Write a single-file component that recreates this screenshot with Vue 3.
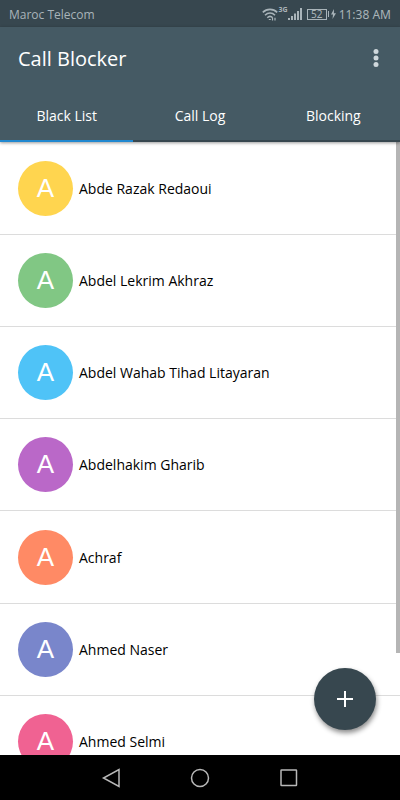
<script setup>
import { ref } from 'vue'

const tabs = ['Black List', 'Call Log', 'Blocking']
const active = ref(0)

const contacts = [
  { name: 'Abde Razak Redaoui', color: '#ffd54f' },
  { name: 'Abdel Lekrim Akhraz', color: '#81c784' },
  { name: 'Abdel Wahab Tihad Litayaran', color: '#4fc3f7' },
  { name: 'Abdelhakim Gharib', color: '#ba68c8' },
  { name: 'Achraf', color: '#ff8a65' },
  { name: 'Ahmed Naser', color: '#7986cb' },
  { name: 'Ahmed Selmi', color: '#f06292' },
]
</script>

<template>
  <div class="screen">
    <div class="status">
      <span class="carrier">Maroc Telecom</span>
      <svg class="wifi" width="16" height="13" viewBox="0 0 16 13" fill="none" stroke="currentColor" stroke-width="1.6">
        <path d="M.8 4.400C4.800 .4 11.200 .4 15.200 4.400M3 7.200C6 4.200 10 4.200 13 7.200M5.300 9.800c1.700-1.700 3.700-1.700 5.400 0" />
        <path d="M6.800 11.500h2M10.500 12.500V9.800M13 9.800v2.700" stroke-width="1.200" />
      </svg>
      <span class="net">3G</span>
      <svg class="signal" width="14" height="12" viewBox="0 0 14 12" fill="currentColor">
        <path d="M0 10h2v2H0zM3 8h2v4H3zM6 5.500h2V12H6zM9 3h2v9H9zM12 0h2v12h-2z" />
      </svg>
      <span class="battery">52</span>
      <svg class="charge" width="9" height="12" viewBox="0 0 9 12" fill="currentColor">
        <path d="M1 3h1v6H1zM7 1L4 6.500h2L5.500 11 9 5.200H6.900z" />
      </svg>
      <span class="time">11:38 AM</span>
    </div>

    <header class="header">
      <div class="bar">
        <h1>Call Blocker</h1>
        <button class="more" type="button" aria-label="More options">
          <svg width="6" height="20" viewBox="0 0 6 20" fill="currentColor">
            <circle cx="3" cy="3.500" r="2.500" />
            <circle cx="3" cy="10" r="2.500" />
            <circle cx="3" cy="16.500" r="2.500" />
          </svg>
        </button>
      </div>
      <nav class="tabs">
        <button
          v-for="(tab, i) in tabs"
          :key="tab"
          type="button"
          class="tab"
          :class="{ active: i === active }"
          @click="active = i"
        >{{ tab }}</button>
      </nav>
    </header>

    <main class="content">
      <ul class="list">
        <li v-for="c in contacts" :key="c.name" class="row">
          <span class="avatar" :style="{ background: c.color }">A</span>
          <span class="name">{{ c.name }}</span>
        </li>
      </ul>
      <div class="thumb"></div>
      <button class="fab" type="button" aria-label="Add contact">
        <svg width="18" height="18" viewBox="0 0 18 18" stroke="currentColor" stroke-width="2">
          <path d="M9 1v16M1 9h16" />
        </svg>
      </button>
    </main>

    <footer class="navbar">
      <button type="button" aria-label="Back">
        <svg width="20" height="20" viewBox="0 0 20 20"><path d="M18 1.500v17L2.500 10z" /></svg>
      </button>
      <button type="button" aria-label="Home">
        <svg width="20" height="20" viewBox="0 0 20 20"><circle cx="10" cy="10" r="8.500" /></svg>
      </button>
      <button type="button" aria-label="Recent apps">
        <svg width="20" height="20" viewBox="0 0 20 20"><rect x="2" y="2" width="15.500" height="15.500" rx="0.500" /></svg>
      </button>
    </footer>
  </div>
</template>

<style>
body {
  margin: 0;
}
</style>

<style scoped>
.screen {
  display: flex;
  flex-direction: column;
  height: 100vh;
  background: #fff;
  color: #000;
  font-family: "Open Sans", "Noto Sans", sans-serif;
  overflow: hidden;
}

button {
  margin: 0;
  padding: 0;
  border: 0;
  background: none;
  color: inherit;
  font: inherit;
  cursor: pointer;
}

svg {
  display: block;
}

.status {
  display: flex;
  flex: none;
  align-items: center;
  box-sizing: border-box;
  height: 27px;
  padding: 1px 9px 0;
  background: #37474f;
  color: #a9b4b9;
  font-family: "Noto Sans", sans-serif;
  font-size: 12px;
}

.carrier {
  flex: 1;
  font-family: "Open Sans", sans-serif;
}

.net {
  align-self: flex-start;
  margin: 5px 0 0 1px;
  font-size: 7px;
  font-weight: 700;
  line-height: 8px;
}

.signal {
  margin-right: 5px;
}

.battery {
  width: 18px;
  border: 1px solid;
  font-size: 10px;
  line-height: 9px;
  text-align: center;
}

.charge {
  margin-right: 3px;
}

.header {
  position: relative;
  z-index: 1;
  flex: none;
  background: #455a64;
  color: #fff;
  box-shadow: 0 1px 3px rgba(0, 0, 0, 0.4);
}

.bar {
  display: flex;
  align-items: center;
  justify-content: space-between;
  height: 62px;
  padding: 0 21px 0 18px;
}

h1 {
  margin: 0;
  font-size: 20px;
  font-weight: 400;
}

.more {
  color: #cfd8dc;
}

.tabs {
  display: grid;
  grid-template-columns: repeat(3, 1fr);
}

.tab {
  height: 53px;
  padding-top: 2px;
  border-bottom: 2px solid #37474f;
  font-size: 14px;
}

.tab.active {
  border-color: #2188d0;
}

.content {
  position: relative;
  flex: 1;
  min-height: 0;
  overflow: hidden;
}

.list {
  margin: 0;
  padding: 0;
  list-style: none;
}

.row {
  display: flex;
  align-items: center;
  gap: 6px;
  height: 91px;
  padding: 0 18px;
  border-bottom: 1px solid #dcdcdc;
}

.row:nth-child(4n + 1) {
  height: 92px;
}

.avatar {
  flex: none;
  width: 55px;
  border-radius: 50%;
  color: #fff;
  font-family: "Liberation Sans", sans-serif;
  font-size: 26px;
  line-height: 55px;
  text-align: center;
}

.name {
  font-size: 14px;
}

.thumb {
  position: absolute;
  top: 0;
  right: 0;
  width: 4px;
  height: 83.3%;
  background: #b5b5b5;
}

.fab {
  position: absolute;
  right: 24px;
  bottom: 25px;
  display: flex;
  align-items: center;
  justify-content: center;
  width: 62px;
  height: 62px;
  border-radius: 50%;
  background: #37474f;
  color: #fff;
  box-shadow: 1px 3px 5px rgba(0, 0, 0, 0.45);
}

.navbar {
  display: flex;
  flex: none;
  align-items: center;
  justify-content: center;
  gap: 69px;
  height: 45px;
  background: #000;
}

.navbar svg {
  fill: none;
  stroke: #b8b8b8;
  stroke-width: 1.5;
}
</style>
